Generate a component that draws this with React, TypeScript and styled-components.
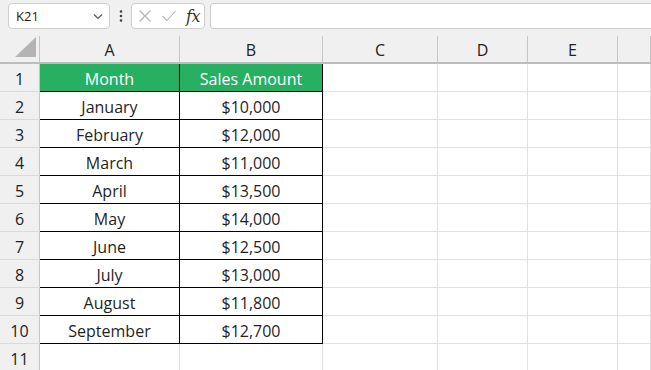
import React from 'react';
import styled, { createGlobalStyle } from 'styled-components';

const GlobalStyle = createGlobalStyle`
  html, body {
    margin: 0;
    padding: 0;
    background: #ffffff;
    overflow: hidden;
  }
  body {
    font-family: "Open Sans", "Noto Sans", sans-serif;
  }
`;

const Page = styled.div`
  width: 651px;
  height: 370px;
  overflow: hidden;
  background: #ffffff;
`;

const Toolbar = styled.div`
  height: 36px;
  background: #f0f0f0;
  display: flex;
  align-items: flex-start;
  padding: 3px 0 0 8px;
  box-sizing: border-box;
`;

const NameBox = styled.div`
  width: 102px;
  height: 26px;
  box-sizing: border-box;
  background: #ffffff;
  border: 1px solid #cfcfcf;
  border-radius: 4px;
  display: flex;
  align-items: center;
  justify-content: space-between;
  padding: 0 5px 0 7px;
  font-size: 13px;
  color: #222;
`;

const Dots = styled.div`
  width: 21px;
  height: 26px;
  display: flex;
  align-items: center;
  justify-content: center;
`;

const ButtonGroup = styled.div`
  width: 74px;
  height: 26px;
  box-sizing: border-box;
  background: #ffffff;
  border: 1px solid #cfcfcf;
  border-radius: 4px;
  display: flex;
  align-items: center;
  justify-content: space-between;
  padding: 0 4px 0 6px;
`;

const Fx = styled.span`
  font-family: "DejaVu Serif", "Liberation Serif", serif;
  font-style: italic;
  font-size: 16px;
  color: #333;
  letter-spacing: -0.5px;
`;

const FormulaInput = styled.div`
  flex: 1;
  height: 26px;
  margin-left: 5px;
  box-sizing: border-box;
  background: #ffffff;
  border: 1px solid #cfcfcf;
  border-right: none;
  border-radius: 4px 0 0 4px;
`;

const Grid = styled.div`
  display: grid;
  grid-template-columns: 40px 140px 143px 115px 90px 90px 1fr;
  grid-auto-rows: 28px;
`;

const Corner = styled.div`
  background: #f0f0f0;
  border-right: 1px solid #c6c6c6;
  border-bottom: 2px solid #bdbdbd;
  box-sizing: border-box;
  display: flex;
  align-items: flex-end;
  justify-content: flex-end;
  padding: 0 3px 5px 0;
`;

const ColHead = styled.div`
  background: #f0f0f0;
  border-right: 1px solid #c6c6c6;
  border-bottom: 2px solid #bdbdbd;
  box-sizing: border-box;
  display: flex;
  align-items: center;
  justify-content: center;
  font-size: 16px;
  color: #222;
  padding-top: 1px;
`;

const RowHead = styled.div`
  background: #f0f0f0;
  border-right: 1px solid #c6c6c6;
  border-bottom: 1px solid #d9d9d9;
  box-sizing: border-box;
  display: flex;
  align-items: center;
  justify-content: center;
  font-size: 16px;
  color: #222;
  padding-top: 2px;
`;

const Cell = styled.div<{ $header?: boolean; $boxed?: boolean }>`
  box-sizing: border-box;
  background: ${({ $header }) => ($header ? '#27b062' : '#ffffff')};
  color: ${({ $header }) => ($header ? '#ffffff' : '#1f1f1f')};
  border-right: 1px solid ${({ $boxed }) => ($boxed ? '#000000' : '#e1e1e1')};
  border-bottom: 1px solid ${({ $boxed }) => ($boxed ? '#000000' : '#e1e1e1')};
  display: flex;
  align-items: center;
  justify-content: center;
  font-size: 16px;
  white-space: nowrap;
  padding-top: 2px;
`;

const data: [string, string][] = [
  ['January', '$10,000'],
  ['February', '$12,000'],
  ['March', '$11,000'],
  ['April', '$13,500'],
  ['May', '$14,000'],
  ['June', '$12,500'],
  ['July', '$13,000'],
  ['August', '$11,800'],
  ['September', '$12,700'],
];

const columns = ['A', 'B', 'C', 'D', 'E', ''];
const empties = 4;

const Chevron = () => (
  <svg width="12" height="12" viewBox="0 0 12 12">
    <path d="M2 4.5 L6 8.5 L10 4.5" fill="none" stroke="#555" strokeWidth="1.2" />
  </svg>
);

const App: React.FC = () => {
  const rows: { label: string; a: string; b: string; header?: boolean; boxed: boolean }[] = [
    { label: '1', a: 'Month', b: 'Sales Amount', header: true, boxed: true },
    ...data.map(([a, b], i) => ({ label: String(i + 2), a, b, boxed: true })),
    { label: '11', a: '', b: '', boxed: false },
  ];

  return (
    <Page>
      <GlobalStyle />
      <Toolbar>
        <NameBox>
          <span>K21</span>
          <Chevron />
        </NameBox>
        <Dots>
          <svg width="4" height="14" viewBox="0 0 4 14">
            <circle cx="2" cy="2.5" r="1.3" fill="#444" />
            <circle cx="2" cy="7" r="1.3" fill="#444" />
            <circle cx="2" cy="11.5" r="1.3" fill="#444" />
          </svg>
        </Dots>
        <ButtonGroup>
          <svg width="14" height="14" viewBox="0 0 14 14">
            <path d="M1.5 1.5 L12.5 12.5 M12.5 1.5 L1.5 12.5" stroke="#b5b5b5" strokeWidth="1.1" fill="none" />
          </svg>
          <svg width="16" height="14" viewBox="0 0 16 14">
            <path d="M1.5 7 L6 11.5 L14.5 2" stroke="#b5b5b5" strokeWidth="1.1" fill="none" />
          </svg>
          <Fx>fx</Fx>
        </ButtonGroup>
        <FormulaInput />
      </Toolbar>
      <Grid>
        <Corner>
          <svg width="21" height="20" viewBox="0 0 21 20">
            <path d="M21 0 L21 20 L0 20 Z" fill="#b4b4b4" />
          </svg>
        </Corner>
        {columns.map((c, i) => (
          <ColHead key={i}>{c}</ColHead>
        ))}
        {rows.map((r) => (
          <React.Fragment key={r.label}>
            <RowHead>{r.label}</RowHead>
            <Cell $header={r.header} $boxed={r.boxed}>{r.a}</Cell>
            <Cell $header={r.header} $boxed={r.boxed}>{r.b}</Cell>
            {Array.from({ length: empties }).map((_, j) => (
              <Cell key={j} />
            ))}
          </React.Fragment>
        ))}
      </Grid>
    </Page>
  );
};

export default App;
